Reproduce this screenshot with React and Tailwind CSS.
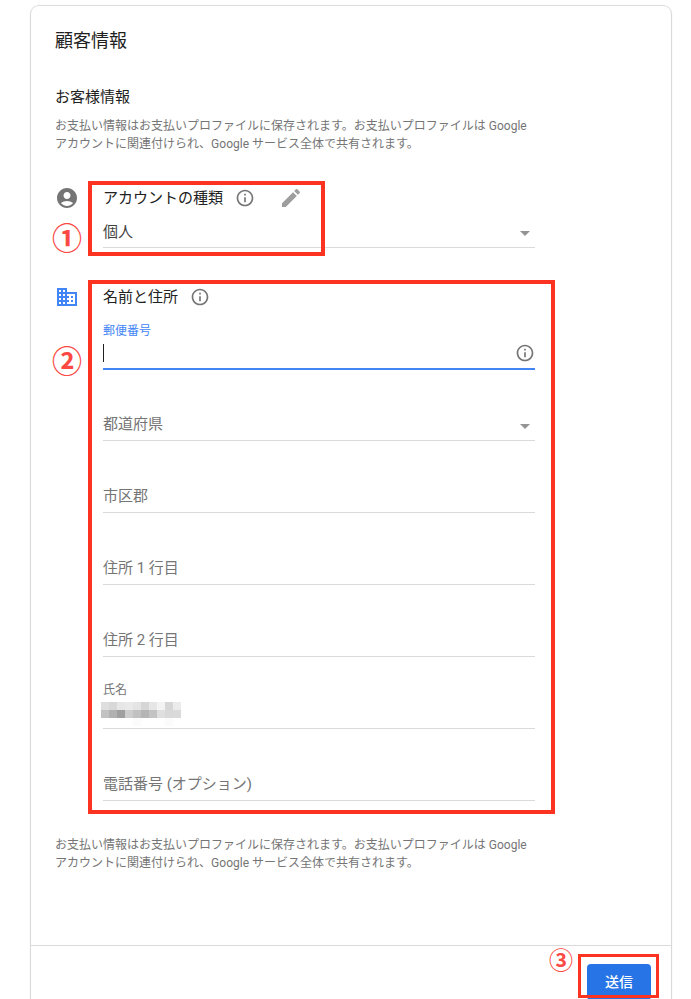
import { useState } from "react";
import { MdAccountCircle, MdBusiness, MdEdit, MdInfoOutline } from "react-icons/md";

const NOTICE =
  "お支払い情報はお支払いプロファイルに保存されます。お支払いプロファイルは Google アカウントに関連付けられ、Google サービス全体で共有されます。";

// pixelated name, 8px cells
const MOSAIC = [
  ["#dedede", "#d8d8d8", "#e6e6e6", "#e9e9e9", "#e4e4e4", "#d6d6d6", "#e6e6e6", "#f3f3f3", "#d6d6d6", "#ebebeb"],
  ["#c2c2c2", "#b1b1b1", "#9f9f9f", "#cdcdcd", "#c1c1c1", "#b5b5b5", "#c3c3c3", "#dfdfdf", "#d9d9d9", "#dadada"],
  ["#fff", "#fff", "#fff", "#fff", "#fbfbfb", "#fff", "#fff", "#fff", "#fbfbfb", "#fff"],
];

function Arrow() {
  return (
    <svg viewBox="0 0 10 5" className="pointer-events-none absolute right-[5px] bottom-[11px] h-[5px] w-2.5" aria-hidden="true">
      <path d="M0 0h10L5 5z" fill="#949494" />
    </svg>
  );
}

function InfoButton({ label }) {
  return (
    <button type="button" aria-label={label} className="text-[#757575]">
      <MdInfoOutline className="size-5" />
    </button>
  );
}

function Field({ id, label, value, onChange, select }) {
  return (
    <div className="relative flex h-[72px] flex-col justify-end border-b border-[#dadada] pb-1">
      <div className="grid">
        <label htmlFor={id} className="col-start-1 row-start-1 leading-6 text-[#757575]">
          {value ? "" : label}
        </label>
        {select ? (
          <select id={id} aria-label={label} value={value} onChange={onChange} className="col-start-1 row-start-1 h-6 w-full appearance-none bg-transparent outline-none">
            <option value=""></option>
          </select>
        ) : (
          <input id={id} aria-label={label} value={value} onChange={onChange} className="col-start-1 row-start-1 h-6 w-full bg-transparent outline-none" />
        )}
      </div>
      {select && <Arrow />}
    </div>
  );
}

export default function App() {
  const [form, setForm] = useState({ pref: "", city: "", line1: "", line2: "", phone: "" });
  const bind = (key) => ({
    id: key,
    value: form[key],
    onChange: (e) => setForm({ ...form, [key]: e.target.value }),
  });

  return (
    <div className="h-screen overflow-hidden bg-white pt-1.5 pr-5 pl-[31px] font-['Roboto','Noto_Sans_CJK_JP',sans-serif] text-[15px] text-[#212121]">
      <form lang="ja" onSubmit={(e) => e.preventDefault()} className="rounded-lg bg-white shadow-[0_0_1px_1px_rgba(0,0,0,0.14),0_1px_2px_rgba(0,0,0,0.1)]">
        <div className="px-6 pt-[23px] pb-[73px]">
          <h1 className="text-lg leading-6">顧客情報</h1>
          <div className="max-w-[480px]">
            <h2 className="mt-8 leading-6">お客様情報</h2>
            <p className="mt-2 text-xs leading-[18px] text-[#757575]">{NOTICE}</p>

            <section className="relative mt-[33px] flex gap-6">
              <MdAccountCircle className="size-6 shrink-0 text-[#757575]" />
              <div className="min-w-0 flex-1">
                <div className="flex h-6 items-center">
                  <h3 id="type-title" className="mr-3 leading-6">アカウントの種類</h3>
                  <InfoButton label="アカウントの種類" />
                  <button type="button" aria-label="編集" className="ml-6 text-[#9e9e9e]">
                    <MdEdit className="size-6" />
                  </button>
                </div>
                <div className="relative flex h-[38px] items-end border-b border-[#dadada] pb-[3px]">
                  <select aria-labelledby="type-title" className="h-6 w-full appearance-none bg-transparent leading-6 text-[#424242] outline-none">
                    <option>個人</option>
                  </select>
                  <Arrow />
                </div>
              </div>
              <div className="pointer-events-none absolute -top-[5px] left-[33px] h-[75px] w-[237px] border-4 border-[#fb3320]" />
              <span className="absolute top-[38px] -left-[3px] text-[30px] leading-[30px] font-bold text-[#fb4a44]">①</span>
            </section>

            <section className="relative mt-[37px] flex gap-6">
              <MdBusiness className="size-6 shrink-0 text-[#4285f4]" />
              <div className="min-w-0 flex-1">
                <div className="flex h-6 items-center">
                  <h3 className="mr-3 leading-6">名前と住所</h3>
                  <InfoButton label="名前と住所" />
                </div>

                <div className="h-[60px] border-b border-[#4285f4] pt-3.5 shadow-[0_1px_0_#4285f4]">
                  <label htmlFor="postal" className="block text-xs leading-4 text-[#4285f4]">郵便番号</label>
                  <div className="relative flex h-7 items-center">
                    <span className="absolute left-0 h-[18px] w-px bg-[#212121]" />
                    <input id="postal" className="h-6 min-w-0 flex-1 bg-transparent caret-transparent outline-none" />
                    <InfoButton label="郵便番号" />
                  </div>
                </div>

                <Field label="都道府県" select {...bind("pref")} />
                <Field label="市区郡" {...bind("city")} />
                <Field label="住所 1 行目" {...bind("line1")} />
                <Field label="住所 2 行目" {...bind("line2")} />

                <div className="relative h-[72px] border-b border-[#dadada] pt-[25px]">
                  <label htmlFor="name" className="block text-xs leading-4 text-[#757575]">氏名</label>
                  <input id="name" className="h-6 w-full bg-transparent outline-none" />
                  <svg viewBox="0 0 80 24" shapeRendering="crispEdges" className="pointer-events-none absolute top-[45px] -left-0.5 h-6 w-20" aria-hidden="true">
                    {MOSAIC.map((row, y) =>
                      row.map((fill, x) => <rect key={`${x}-${y}`} x={x * 8} y={y * 8} width="8" height="8" fill={fill} />)
                    )}
                  </svg>
                </div>

                <Field label="電話番号 (オプション)" {...bind("phone")} />
              </div>
              <div className="pointer-events-none absolute -top-[5px] -right-5 -bottom-[13px] left-[33px] border-4 border-[#fb3320]" />
              <span className="absolute top-[62px] -left-[3px] text-[30px] leading-[30px] font-bold text-[#fb4a44]">②</span>
            </section>

            <p className="mt-[35px] text-xs leading-[18px] text-[#757575]">{NOTICE}</p>
          </div>
        </div>

        <div className="flex justify-end border-t border-[#dadada] px-5 py-[18px]">
          <div className="relative">
            <button type="submit" className="h-9 w-16 rounded bg-[#2774e6] text-sm font-medium text-white">送信</button>
            <div className="pointer-events-none absolute -top-2.5 -left-[9px] h-11 w-[81px] border-[3px] border-[#fb3320]" />
            <span className="absolute -top-[15px] -left-[38px] text-2xl leading-6 font-bold text-[#fb4a44]">③</span>
          </div>
        </div>
      </form>
    </div>
  );
}
